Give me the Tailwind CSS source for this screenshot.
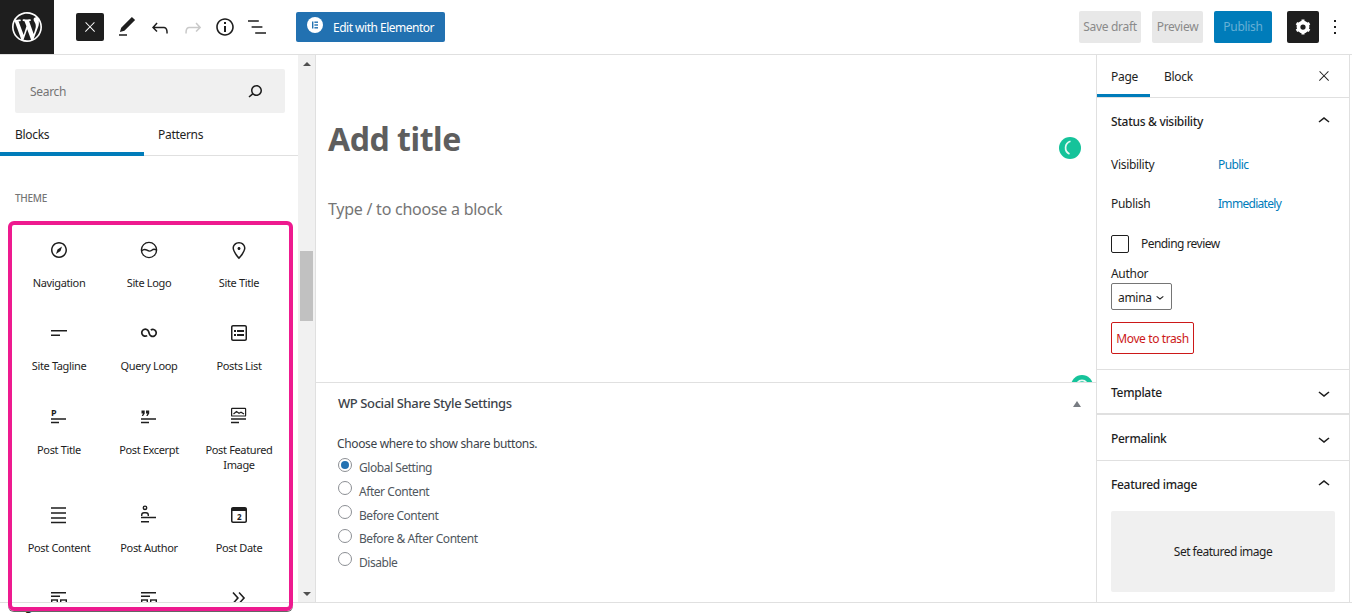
<!DOCTYPE html>
<html lang="en">
<head>
<meta charset="utf-8">
<title>Add title</title>
<script src="https://cdn.jsdelivr.net/npm/@tailwindcss/browser@4"></script>
</head>
<body class="bg-white">
<div class="relative w-[1352px] h-[613px] overflow-hidden flex flex-col font-['Noto_Sans',sans-serif] text-[12px] text-[#1e1e1e] tracking-[-0.3px]">

  <header class="h-[55px] shrink-0 flex items-center border-b border-[#e0e0e0]">
    <div class="w-[54px] h-[54px] bg-[#1e1e1e] flex items-center justify-center">
      <svg class="w-[36px] h-[36px]" viewBox="-2 -2 24 24" fill="#fff"><path d="M20 10c0-5.51-4.49-10-10-10C4.48 0 0 4.49 0 10c0 5.52 4.48 10 10 10 5.51 0 10-4.48 10-10zM7.78 15.37L4.37 6.22c.55-.02 1.17-.08 1.17-.08.5-.06.44-1.13-.06-1.11 0 0-1.45.11-2.37.11-.18 0-.37 0-.58-.01C4.12 2.69 6.87 1.11 10 1.11c2.33 0 4.45.87 6.05 2.34-.68-.11-1.65.39-1.65 1.58 0 .74.45 1.36.9 2.1.35.61.55 1.36.55 2.46 0 1.49-1.4 5-1.4 5l-3.03-8.37c.54-.02.82-.17.82-.17.5-.05.44-1.25-.06-1.22 0 0-1.44.12-2.38.12-.87 0-2.33-.12-2.33-.12-.5-.03-.56 1.2-.06 1.22l.92.08 1.26 3.41zM17.41 10c.24-.64.74-1.87.43-4.25.7 1.29 1.05 2.71 1.05 4.25 0 3.29-1.73 6.24-4.4 7.78.97-2.59 1.94-5.2 2.92-7.78zM6.1 18.09C3.12 16.65 1.11 13.53 1.11 10c0-1.3.23-2.48.72-3.59C3.25 10.3 4.67 14.2 6.1 18.09zm4.03-6.63l2.58 6.98c-.86.29-1.76.45-2.71.45-.79 0-1.57-.11-2.29-.33.81-2.38 1.62-4.74 2.42-7.1z"/></svg>
    </div>
    <div class="ml-[22px] w-[28px] h-[28px] rounded-[2px] bg-[#1e1e1e] flex items-center justify-center">
      <svg class="w-[16px] h-[16px]" viewBox="0 0 24 24" fill="#fff"><path d="M13 11.8l6.1-6.3-1-1-6.1 6.2-6.1-6.2-1 1 6.1 6.3-6.5 6.7 1 1 6.5-6.6 6.5 6.6 1-1z"/></svg>
    </div>
    <div class="ml-[11px] flex items-center gap-[9px]">
      <svg class="w-[24px] h-[24px]" viewBox="0 0 24 24" fill="#1e1e1e"><path d="M20.1 5.1L16.9 2 6.2 12.7l-1.3 4.4 4.5-1.3L20.1 5.1zM4 20.8h8v-1.5H4v1.5z"/></svg>
      <svg class="w-[24px] h-[24px] mt-[2px]" viewBox="0 0 24 24" fill="#1e1e1e"><path d="M18.3 11.7c-.6-.6-1.4-.9-2.3-.9H6.7l2.9-3.3-1.1-1-4.5 5L8.5 16l1-1-2.7-2.7H16c.5 0 .9.2 1.3.5 1 1 1 3.4 1 4.5v.3h1.5v-.2c0-1.5 0-4.3-1.5-5.7z"/></svg>
      <svg class="w-[24px] h-[24px] mt-[2px] -mr-[1px]" viewBox="0 0 24 24" fill="#c9c9c9"><path d="M15.6 6.5l-1.1 1 2.9 3.3H8c-.9 0-1.7.3-2.3.9-1.4 1.5-1.4 4.2-1.4 5.6v.2h1.5v-.3c0-1.1 0-3.5 1-4.5.3-.3.7-.5 1.3-.5h9.2L14.5 15l1.1 1.1 4.6-4.6-4.6-5z"/></svg>
      <svg class="w-[24px] h-[24px]" viewBox="0 0 24 24" fill="#1e1e1e"><path d="M12 3.2c-4.8 0-8.8 3.9-8.8 8.8 0 4.8 3.9 8.8 8.8 8.8 4.8 0 8.8-3.9 8.8-8.8 0-4.8-4-8.8-8.8-8.8zm0 16c-4 0-7.2-3.3-7.2-7.2C4.8 8 8 4.8 12 4.8s7.2 3.3 7.2 7.2c0 4-3.2 7.2-7.2 7.2zM11 17h2v-6h-2v6zm0-8h2V7h-2v2z"/></svg>
      <svg class="w-[24px] h-[24px] -ml-[1px]" viewBox="0 0 24 24" fill="#1e1e1e"><path d="M13.8 5.2H3v1.5h10.8V5.2zm-3.6 12v1.5H21v-1.5H10.2zm7.2-6H6.6v1.5h10.8v-1.5z"/></svg>
    </div>
    <div class="ml-[27px] w-[149px] h-[30px] rounded-[2px] bg-[#2271b1] flex items-center text-white text-[12px] -mt-[1px] whitespace-nowrap tracking-[-0.5px]">
      <span class="ml-[11px] w-[16px] h-[16px] rounded-full bg-white flex items-center justify-center -mt-[3px]">
        <svg class="w-[8px] h-[8px]" viewBox="0 0 8 8" fill="#2271b1"><rect x="1" y="0.5" width="1.4" height="7"/><rect x="3.4" y="0.5" width="3.6" height="1.4"/><rect x="3.4" y="3.3" width="3.6" height="1.4"/><rect x="3.4" y="6.1" width="3.6" height="1.4"/></svg>
      </span>
      <span class="ml-[10px] mt-[2px]">Edit with Elementor</span>
    </div>
    <div class="ml-auto flex items-center">
      <div class="w-[62px] h-[32px] rounded-[2px] bg-[#e8e8e8] text-[#8a8a8a] flex items-center justify-center">Save draft</div>
      <div class="ml-[11px] w-[51px] h-[32px] rounded-[2px] bg-[#e8e8e8] text-[#8a8a8a] flex items-center justify-center">Preview</div>
      <div class="ml-[11px] w-[58px] h-[32px] rounded-[2px] bg-[#007cba] text-[#66b0d6] flex items-center justify-center">Publish</div>
      <div class="ml-[15px] w-[32px] h-[32px] rounded-[2px] bg-[#1e1e1e] flex items-center justify-center">
        <svg class="w-[18px] h-[18px]" viewBox="0 0 24 24"><circle cx="12" cy="12" r="6" fill="none" stroke="#fff" stroke-width="5"/><g stroke="#fff" stroke-width="4"><path d="M12 2v4M12 18v4M3.3 7l3.5 2M17.2 15l3.5 2M3.3 17l3.5-2M17.2 9l3.5-2"/></g></svg>
      </div>
      <svg class="ml-[4px] mr-[5px] w-[24px] h-[24px]" viewBox="0 0 24 24" fill="#1e1e1e"><path d="M13 19h-2v-2h2v2zm0-6h-2v-2h2v2zm0-6h-2V5h2v2z"/></svg>
    </div>
  </header>

  <div class="h-[548px] shrink-0 flex border-b border-[#e0e0e0]">
    <!-- Inserter -->
    <aside class="w-[298px] shrink-0 overflow-hidden">
      <div class="pt-[14px] pl-[15px] pr-[13px]">
        <div class="h-[44px] rounded-[2px] bg-[#f0f0f0] flex items-center justify-between pl-[15px] pr-[19px]">
          <span class="text-[#757575] mt-[1px]">Search</span>
          <svg class="w-[24px] h-[24px] -mr-[1px]" viewBox="0 0 24 24" fill="#1e1e1e"><path d="M13.5 6C10.5 6 8 8.5 8 11.5c0 1.1.3 2.1.9 3l-3.4 3 1 1.1 3.4-2.9c1 .9 2.2 1.4 3.6 1.4 3 0 5.5-2.5 5.5-5.5C19 8.5 16.5 6 13.5 6zm0 9.5c-2.2 0-4-1.8-4-4s1.8-4 4-4 4 1.8 4 4-1.8 4-4 4z"/></svg>
        </div>
      </div>
      <div class="h-[43px] flex border-b border-[#e0e0e0]">
        <div class="w-[144px] pl-[15px] pt-[13px] border-b-[4px] border-[#007cba] h-[43px]">Blocks</div>
        <div class="pl-[14px] pt-[13px]">Patterns</div>
      </div>
      <div class="pt-[36px] pl-[15px] text-[10px] font-medium text-[#757575] uppercase leading-[13px]">Theme</div>
      <div class="mt-[33px] ml-[14px] w-[270px] grid grid-cols-[90px_90px_90px] text-center text-[11px] tracking-[-0.35px] leading-[15px] text-[#1e1e1e]">
        <div class="h-[83px] flex flex-col items-center"><svg class="w-[24px] h-[24px]" viewBox="0 0 24 24" fill="#1e1e1e"><path d="M12 4c-4.4 0-8 3.6-8 8s3.6 8 8 8 8-3.6 8-8-3.6-8-8-8zm0 14.5c-3.6 0-6.5-2.9-6.5-6.5S8.4 5.5 12 5.5s6.5 2.9 6.5 6.5-2.9 6.5-6.5 6.5zM9 16l4.5-3L15 8.4l-4.5 3L9 16z"/></svg><span class="mt-[13px]">Navigation</span></div>
        <div class="h-[83px] flex flex-col items-center"><svg class="w-[24px] h-[24px]" viewBox="0 0 24 24" fill="none" stroke="#1e1e1e" stroke-width="1.4"><circle cx="12" cy="12" r="7.6"/><path d="M4.6 12.8c2-1.8 3.6-1.8 5.4-.6s3.4 1.2 4.8 0 3-1.2 4.4-.2"/></svg><span class="mt-[13px]">Site Logo</span></div>
        <div class="h-[83px] flex flex-col items-center"><svg class="w-[24px] h-[24px]" viewBox="0 0 24 24" fill="#1e1e1e"><path d="M12 9c-.8 0-1.5.7-1.5 1.5S11.2 12 12 12s1.5-.7 1.5-1.5S12.8 9 12 9zm0-5c-3.6 0-6.5 2.8-6.5 6.2 0 .8.3 1.8.9 3.1.5 1.1 1.2 2.3 2 3.6.7 1 3 3.8 3.2 3.9l.4.5.4-.5c.2-.2 2.6-2.9 3.2-3.9.8-1.2 1.5-2.5 2-3.6.6-1.3.9-2.3.9-3.1C18.5 6.8 15.6 4 12 4zm4.3 8.7c-.5 1-1.1 2.2-1.9 3.4-.5.7-1.7 2.2-2.4 3-.7-.8-1.9-2.3-2.4-3-.8-1.2-1.4-2.3-1.9-3.3-.6-1.4-.7-2.2-.7-2.5 0-2.6 2.2-4.7 5-4.7s5 2.1 5 4.7c0 .2-.1 1-.7 2.4z"/></svg><span class="mt-[13px]">Site Title</span></div>

        <div class="h-[83px] flex flex-col items-center"><svg class="w-[24px] h-[24px]" viewBox="0 0 24 24" fill="#1e1e1e"><path d="M4 10.5h16V9H4v1.5zM4 15h9v-1.5H4V15z"/></svg><span class="mt-[13px]">Site Tagline</span></div>
        <div class="h-[83px] flex flex-col items-center"><svg class="w-[24px] h-[24px]" viewBox="0 0 24 24" fill="none" stroke="#1e1e1e" stroke-width="1.7"><path d="M10.2 14.6A3.5 3.5 0 1 1 11.6 10.6l.8 2.4a3.5 3.5 0 1 0 1.4-4"/></svg><span class="mt-[13px]">Query Loop</span></div>
        <div class="h-[83px] flex flex-col items-center"><svg class="w-[24px] h-[24px]" viewBox="0 0 24 24" fill="#1e1e1e"><path d="M18 4H6c-1.1 0-2 .9-2 2v12c0 1.1.9 2 2 2h12c1.1 0 2-.9 2-2V6c0-1.1-.9-2-2-2zm.5 14c0 .3-.2.5-.5.5H6c-.3 0-.5-.2-.5-.5V6c0-.3.2-.5.5-.5h12c.3 0 .5.2.5.5v12zM7 11h2V9H7v2zm0 4h2v-2H7v2zm3-4h7V9h-7v2zm0 4h7v-2h-7v2z"/></svg><span class="mt-[13px]">Posts List</span></div>

        <div class="h-[99px] flex flex-col items-center"><svg class="w-[24px] h-[24px]" viewBox="0 0 24 24" fill="#1e1e1e"><text x="4" y="12" font-size="9" font-weight="700" font-family="Noto Sans, sans-serif">P</text><path d="M4 14.3h15v1.4H4zM4 17.8h8v1.4H4z"/></svg><span class="mt-[14px]">Post Title</span></div>
        <div class="h-[99px] flex flex-col items-center"><svg class="w-[24px] h-[24px]" viewBox="0 0 24 24" fill="#1e1e1e"><path d="M4.5 6.5h3.2v3L6.1 12H4.8L6 9.5H4.5zM9 6.5h3.2v3L10.6 12H9.3l1.2-2.5H9zM4 14.3h15v1.4H4zM4 17.8h8v1.4H4z"/></svg><span class="mt-[14px]">Post Excerpt</span></div>
        <div class="h-[99px] flex flex-col items-center"><svg class="w-[24px] h-[24px]" viewBox="0 0 24 24" fill="none" stroke="#1e1e1e" stroke-width="1.2"><rect x="4.6" y="4.4" width="14" height="7.6" rx="0.6"/><path d="M6.5 10l3-2.4 2.5 1.6 2-1 3 1.8"/><path stroke-width="1.4" d="M4 15h15M4 18.5h8"/></svg><span class="mt-[14px]">Post Featured Image</span></div>

        <div class="h-[99px] flex flex-col items-center"><svg class="w-[24px] h-[24px]" viewBox="0 0 24 24" fill="#1e1e1e"><path d="M4 4.2h15v1.5H4zM4 9.2h15v1.5H4zM4 14.2h15v1.5H4zM4 18.8h15v1.5H4z"/></svg><span class="mt-[13px]">Post Content</span></div>
        <div class="h-[99px] flex flex-col items-center"><svg class="w-[24px] h-[24px]" viewBox="0 0 24 24" fill="none" stroke="#1e1e1e" stroke-width="1.4"><circle cx="8" cy="4.8" r="1.7"/><path d="M4.7 13v-1c0-1.4 1-2.2 2.3-2.2h2c1.3 0 2.3.8 2.3 2.2v1M4 14.5h15M4 18.8h8"/></svg><span class="mt-[13px]">Post Author</span></div>
        <div class="h-[99px] flex flex-col items-center"><svg class="w-[24px] h-[24px]" viewBox="0 0 24 24" fill="#1e1e1e"><path d="M18 4H6c-1.1 0-2 .9-2 2v12c0 1.1.9 2 2 2h12c1.1 0 2-.9 2-2V6c0-1.1-.9-2-2-2zm.5 14c0 .3-.2.5-.5.5H6c-.3 0-.5-.2-.5-.5V8h13v10z"/><text x="12" y="17" text-anchor="middle" font-size="8" font-weight="700" font-family="Noto Sans, sans-serif">2</text></svg><span class="mt-[13px]">Post Date</span></div>

        <div class="flex flex-col items-center -mt-[16px]"><svg class="w-[24px] h-[24px]" viewBox="0 0 24 24" fill="none" stroke="#1e1e1e" stroke-width="1.4"><path d="M4 6.7h15M4 10.2h9"/><rect x="4.7" y="14" width="5.6" height="5.6"/><rect x="13.7" y="14" width="5.6" height="5.6"/></svg></div>
        <div class="flex flex-col items-center -mt-[16px]"><svg class="w-[24px] h-[24px]" viewBox="0 0 24 24" fill="none" stroke="#1e1e1e" stroke-width="1.4"><path d="M4 6.7h15M4 10.2h9"/><rect x="4.7" y="14" width="5.6" height="5.6"/><rect x="13.7" y="14" width="5.6" height="5.6"/></svg></div>
        <div class="flex flex-col items-center -mt-[16px]"><svg class="w-[24px] h-[24px]" viewBox="0 0 24 24" fill="#1e1e1e"><path d="M6.6 6L5.4 7l4.5 5-4.5 5 1.1 1 5.5-6-5.4-6zm6 0l-1.1 1 4.5 5-4.5 5 1.1 1 5.5-6-5.5-6z"/></svg></div>
      </div>
    </aside>
    <!-- Inserter scrollbar -->
    <div class="relative w-[18px] shrink-0 bg-[#f1f1f1] border-r border-[#e0e0e0]">
      <div class="absolute left-[2px] top-[196px] w-[13px] h-[70px] bg-[#c1c1c1]"></div>
      <div class="absolute left-[5px] top-[7px] w-0 h-0 border-x-[4px] border-x-transparent border-b-[4px] border-b-[#505050]"></div>
      <div class="absolute left-[5px] bottom-[6px] w-0 h-0 border-x-[4px] border-x-transparent border-t-[4px] border-t-[#505050]"></div>
    </div>

    <!-- Editor -->
    <main class="w-[780px] shrink-0 flex flex-col">
      <div class="relative h-[327px] shrink-0 overflow-hidden pl-[12px]">
        <div class="pt-[62px] text-[32px] leading-[44px] font-bold text-[#5e5e5e] tracking-[-0.45px]">Add title</div>
        <div class="mt-[36px] text-[16px] leading-[24px] text-[#757575] tracking-[-0.25px]">Type / to choose a block</div>
        <div class="absolute left-[743px] top-[82px] w-[22px] h-[22px] rounded-full bg-[#15c39a] flex items-center justify-center">
          <svg class="w-[22px] h-[22px]" viewBox="0 0 22 22" fill="none" stroke="#e6f9f4" stroke-width="1.7"><path d="M11.5 4.3A6.8 6.8 0 0 0 10.5 17"/></svg>
        </div>
        <div class="absolute left-[755px] top-[320px] w-[22px] h-[22px] rounded-full bg-[#15c39a] flex items-center justify-center">
          <svg class="w-[22px] h-[22px]" viewBox="0 0 22 22" fill="none" stroke="#e6f9f4" stroke-width="1.7"><path d="M6.5 7.5a6 6 0 0 1 9 0"/></svg>
        </div>
      </div>
      <section class="flex-1 border-t border-[#e0e0e0] text-[#50575e] tracking-[-0.45px]">
        <div class="h-[42px] flex items-center justify-between pl-[22px] pr-[15px]">
          <span class="text-[13px] font-medium text-[#3c434a] tracking-[-0.4px]">WP Social Share Style Settings</span>
          <span class="w-0 h-0 border-x-[4px] border-x-transparent border-b-[6px] border-b-[#787c82]"></span>
        </div>
        <div class="pl-[21px] pt-[11px] text-[#3c434a] leading-[16px] tracking-[-0.35px]">Choose where to show share buttons.</div>
        <div class="pl-[22px] flex flex-col">
          <div class="h-[24px] flex items-center gap-[7px] mt-[4px]"><span class="w-[14px] h-[14px] -mt-[7px] rounded-full border border-[#8c8f94] flex items-center justify-center"><span class="w-[8px] h-[8px] rounded-full bg-[#2271b1]"></span></span><span>Global Setting</span></div>
          <div class="h-[24px] flex items-center gap-[7px]"><span class="w-[14px] h-[14px] -mt-[8px] rounded-full border border-[#8c8f94]"></span><span>After Content</span></div>
          <div class="h-[24px] flex items-center gap-[7px]"><span class="w-[14px] h-[14px] -mt-[8px] rounded-full border border-[#8c8f94]"></span><span>Before Content</span></div>
          <div class="h-[23px] flex items-center gap-[7px]"><span class="w-[14px] h-[14px] -mt-[8px] rounded-full border border-[#8c8f94]"></span><span class="-mt-[2px]">Before &amp; After Content</span></div>
          <div class="h-[24px] flex items-center gap-[7px]"><span class="w-[14px] h-[14px] -mt-[8px] rounded-full border border-[#8c8f94]"></span><span>Disable</span></div>
        </div>
      </section>
    </main>

    <!-- Settings sidebar -->
    <aside class="w-[253px] shrink-0 border-l border-[#e0e0e0] flex flex-col overflow-hidden">
      <div class="h-[43px] shrink-0 flex items-center border-b border-[#e0e0e0] relative">
        <div class="w-[53px] h-[42px] pl-[14px] pt-[13px] border-b-[3px] border-[#007cba]">Page</div>
        <div class="pl-[14px] mt-[2px]">Block</div>
        <svg class="ml-auto mr-[17px] w-[16px] h-[16px]" viewBox="0 0 24 24" fill="#1e1e1e"><path d="M13 11.8l6.1-6.3-1-1-6.1 6.2-6.1-6.2-1 1 6.1 6.3-6.5 6.7 1 1 6.5-6.6 6.5 6.6 1-1z"/></svg>
      </div>
      <div class="h-[272px] shrink-0 border-b border-[#e0e0e0] px-[14px]">
        <div class="h-[48px] flex items-center justify-between font-medium">
          <span>Status &amp; visibility</span>
          <svg class="w-[24px] h-[24px] -mr-[1px] -mt-[3px]" viewBox="0 0 24 24" fill="#1e1e1e"><path d="M6.5 12.4L12 8l5.5 4.4-.9 1.2L12 10l-4.5 3.6-1-1.2z"/></svg>
        </div>
        <div class="mt-[10px] flex leading-[18px]"><span class="w-[107px]">Visibility</span><span class="text-[#007cba] tracking-[-0.6px]">Public</span></div>
        <div class="mt-[21px] flex leading-[18px]"><span class="w-[107px]">Publish</span><span class="text-[#007cba] tracking-[-0.7px]">Immediately</span></div>
        <div class="mt-[22px] flex items-center leading-[18px]"><span class="w-[18px] h-[18px] rounded-[2px] border border-[#1e1e1e]"></span><span class="ml-[12px] tracking-[-0.55px]">Pending review</span></div>
        <div class="mt-[13px] leading-[16px]">Author</div>
        <div class="mt-[1px] w-[61px] h-[27px] rounded-[2px] border border-[#757575] flex items-center pl-[6px]"><span class="mt-[2px]">amina</span><svg class="w-[16px] h-[16px]" viewBox="0 0 24 24" fill="#1e1e1e"><path d="M17.5 11.6L12 16l-5.5-4.4.9-1.2L12 14l4.5-3.6 1 1.2z"/></svg></div>
        <div class="mt-[12px] w-[83px] h-[32px] pt-[2px] rounded-[2px] border border-[#cc1818] flex items-center justify-center text-[#cc1818] tracking-[-0.4px]">Move to trash</div>
      </div>
      <div class="h-[45px] shrink-0 border-b-2 border-[#e0e0e0] px-[14px] pt-[2px] flex items-center justify-between font-medium">
        <span>Template</span>
        <svg class="w-[24px] h-[24px] -mr-[1px]" viewBox="0 0 24 24" fill="#1e1e1e"><path d="M17.5 11.6L12 16l-5.5-4.4.9-1.2L12 14l4.5-3.6 1 1.2z"/></svg>
      </div>
      <div class="h-[46px] shrink-0 border-b border-[#e0e0e0] px-[14px] pt-[2px] flex items-center justify-between font-medium">
        <span>Permalink</span>
        <svg class="w-[24px] h-[24px] -mr-[1px]" viewBox="0 0 24 24" fill="#1e1e1e"><path d="M17.5 11.6L12 16l-5.5-4.4.9-1.2L12 14l4.5-3.6 1 1.2z"/></svg>
      </div>
      <div class="px-[14px]">
        <div class="h-[50px] pb-[2px] flex items-center justify-between font-medium">
          <span>Featured image</span>
          <svg class="w-[24px] h-[24px] -mr-[1px] -mt-[3px]" viewBox="0 0 24 24" fill="#1e1e1e"><path d="M6.5 12.4L12 8l5.5 4.4-.9 1.2L12 10l-4.5 3.6-1-1.2z"/></svg>
        </div>
        <div class="h-[81px] w-[224px] rounded-[2px] bg-[#f0f0f0] flex items-center justify-center tracking-[-0.5px]">Set featured image</div>
      </div>
    </aside>
    <div class="flex-1 border-l border-[#e0e0e0]"></div>
  </div>

  <footer class="h-[10px] pl-[25px] text-[12px] leading-[20px] text-[#1e1e1e]">P</footer>

  <div class="absolute left-[8px] top-[221px] w-[285px] h-[390px] rounded-[6px] border-[4px] border-[#ee1a8f] shadow-[0_1px_0_#666] pointer-events-none"></div>
</div>
</body>
</html>
